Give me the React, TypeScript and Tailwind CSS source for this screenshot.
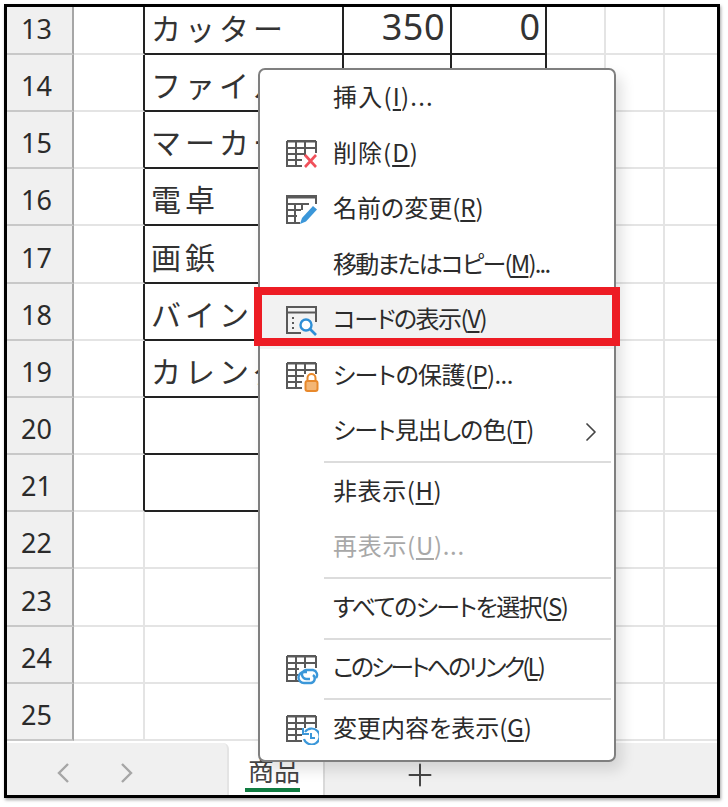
import type { ReactNode } from 'react'
import { ChevronRight, Plus } from 'lucide-react'

const rows = [
  { no: 13, name: 'カッター', price: '350', stock: '0' },
  { no: 14, name: 'ファイル' },
  { no: 15, name: 'マーカー' },
  { no: 16, name: '電卓' },
  { no: 17, name: '画鋲' },
  { no: 18, name: 'バインダー' },
  { no: 19, name: 'カレンダー' },
  { no: 20, name: '' },
  { no: 21, name: '' },
  { no: 22 },
  { no: 23 },
  { no: 24 },
  { no: 25 },
]

// base sheet glyph shared by most of the menu icons
function SheetIcon({ children }: { children?: ReactNode }) {
  return (
    <svg width="34" height="32" viewBox="0 0 34 32" fill="none">
      <path d="M2 3h29M2 3v25h15M2 10h29M2 16h18M2 22h15M11 3v25M20 3v15M31 3v12" stroke="#595959" strokeWidth="2" />
      <path d="M2 2h29v2.5H2z" fill="#595959" />
      {children}
    </svg>
  )
}

function DeleteIcon() {
  return (
    <SheetIcon>
      <path d="M20 17l11 12M31 17L20 29" stroke="#f0505a" strokeWidth="2.6" />
    </SheetIcon>
  )
}

function RenameIcon() {
  return (
    <svg width="34" height="32" viewBox="0 0 34 32" fill="none">
      <path d="M31 10V2H2v27h13M2 10h22M2 16h14M2 22h10M10 10v19M17 10v6" stroke="#595959" strokeWidth="2" />
      <path d="M2 2h29v2.5H2z" fill="#595959" />
      <path d="M15 30l2-6 11-12 4 3.500-11 12z" fill="#3b97d9" />
    </svg>
  )
}

function CodeIcon() {
  return (
    <svg width="34" height="32" viewBox="0 0 34 32" fill="none">
      <path d="M16 28H2V2h29v15M2 7.500h29" stroke="#595959" strokeWidth="2" />
      <path d="M7 13h3M7 18h3M7 23h3" stroke="#595959" strokeWidth="2" strokeDasharray="2 1" />
      <circle cx="21" cy="20" r="5.500" stroke="#2f8fd6" strokeWidth="2.400" fill="#fff" />
      <path d="M25 24l6 6" stroke="#2f8fd6" strokeWidth="2.600" />
    </svg>
  )
}

function LockIcon() {
  return (
    <SheetIcon>
      <rect x="19" y="14" width="15" height="18" fill="#fff" />
      <path d="M22.500 21v-3a4 4 0 0 1 8 0v3" stroke="#e8892c" strokeWidth="2" />
      <rect x="20.500" y="21" width="12" height="10" rx="2" fill="#f3b676" stroke="#e8892c" strokeWidth="2" />
    </SheetIcon>
  )
}

function LinkIcon() {
  return (
    <SheetIcon>
      <rect x="14" y="15" width="20" height="17" fill="#fff" />
      <path d="M22 19h-3a5.500 5.500 0 0 0 0 11h7a4.500 4.500 0 0 0 2-8" stroke="#3b97d9" strokeWidth="2.400" />
      <path d="M25 26h-3a4.500 4.500 0 0 1-1-9h7a5 5 0 0 1 3 8" stroke="#3b97d9" strokeWidth="2.400" />
    </SheetIcon>
  )
}

function HistoryIcon() {
  return (
    <SheetIcon>
      <rect x="17" y="15" width="17" height="17" fill="#fff" />
      <path d="M20 19a8 8 0 1 1-1 7" stroke="#3b97d9" strokeWidth="2.200" />
      <path d="M18 15v6h6" stroke="#3b97d9" strokeWidth="2" />
      <path d="M26 20v5h4" stroke="#3b97d9" strokeWidth="2" />
    </SheetIcon>
  )
}

function MenuItem({ icon, label, hot, tail, active, disabled, arrow, spacing = '' }: {
  icon?: ReactNode
  label: string
  hot: string
  tail?: string
  active?: boolean
  disabled?: boolean
  arrow?: boolean
  spacing?: string
}) {
  return (
    <div className={`flex h-[55.5px] items-center ${active ? 'bg-[#f2f2f2]' : ''}`}>
      <div className="flex w-[73px] justify-end pr-[14px]">{icon}</div>
      <span className={`flex-1 pb-[5px] text-[24px] [font-feature-settings:'palt'] ${spacing} ${disabled ? 'text-[#a8a8a8]' : 'text-[#2b2b2b]'}`}>
        {label}(<span className="underline underline-offset-[3px]">{hot}</span>){tail}
      </span>
      {arrow && <ChevronRight className="mr-[7px] h-[32px] w-[32px] text-[#444]" strokeWidth={1.3} />}
    </div>
  )
}

function Separator() {
  return (
    <div className="flex h-[5px] items-center pl-[64px] pr-[3px]">
      <div className="h-[2px] w-full bg-[#dcdcdc]" />
    </div>
  )
}

export default function App() {
  return (
    <div className="h-[807px] w-[728px] overflow-hidden bg-white pl-[4px] pt-[4px] font-['Noto_Sans','Noto_Sans_CJK_JP',sans-serif]">
      <div className="relative flex h-[794px] w-[716px] flex-col overflow-hidden border-[3px] border-black bg-white shadow-[1px_2px_3px_rgba(0,0,0,0.35)]">
        <div className="grid grid-cols-[67px_71px_199px_108px_95px_59px_59px_1fr]">
          {rows.map((row, i) => {
            const inTable = row.name !== undefined
            const cellH = i === 0 ? 'h-[48px]' : 'h-[57.17px]'
            return (
              <div key={row.no} className="contents">
                <div className={`${cellH} flex items-end justify-center border-b-2 border-r-2 border-b-[#c8c8c8] border-r-[#a6a6a6] bg-[#f0f0f0] pb-[4px] pr-[6px] text-[27px] leading-[40px] text-[#2b2b2b]`}>
                  {row.no}
                </div>
                <div className={`${cellH} border-b-2 border-r-2 border-b-[#e4e4e4] ${inTable ? 'border-r-[#222]' : 'border-r-[#e4e4e4]'}`} />
                <div className={`${cellH} flex items-end border-b-2 border-r-2 pb-[7px] pl-[6px] text-[30px] leading-[38px] tracking-[4px] text-[#333] font-['Noto_Sans_CJK_JP',sans-serif] ${inTable ? 'border-[#222]' : 'border-[#e4e4e4]'}`}>
                  {row.name}
                </div>
                <div className={`${cellH} flex items-end justify-end border-b-2 border-r-2 pb-[6px] pr-[5px] text-[36px] leading-[40px] tracking-[0.500px] text-[#333] ${inTable ? 'border-[#222]' : 'border-[#e4e4e4]'}`}>
                  {row.price}
                </div>
                <div className={`${cellH} flex items-end justify-end border-b-2 border-r-2 pb-[6px] pr-[5px] text-[36px] leading-[40px] text-[#333] ${inTable ? 'border-[#222]' : 'border-[#e4e4e4]'}`}>
                  {row.stock}
                </div>
                <div className={`${cellH} border-b-2 border-r-2 border-[#e4e4e4]`} />
                <div className={`${cellH} border-b-2 border-r-2 border-[#e4e4e4]`} />
                <div className={`${cellH} border-b-2 border-[#e4e4e4]`} />
              </div>
            )
          })}
        </div>

        {/* sheet tabs */}
        <div className="flex flex-1 pt-[2px]">
          <div className="flex w-[222px] items-center gap-[50px] rounded-tr-[6px] border-r-2 border-[#e4e4e4] bg-[#f0f0f0] pl-[49px] pt-[8px]">
            <svg width="14" height="20" viewBox="0 0 14 20" fill="none">
              <path d="M12 1l-9 9 9 9" stroke="#a6a6a6" strokeWidth="2.400" />
            </svg>
            <svg width="14" height="20" viewBox="0 0 14 20" fill="none">
              <path d="M2 1l9 9-9 9" stroke="#a6a6a6" strokeWidth="2.400" />
            </svg>
          </div>
          <div className="flex w-[96px] flex-col items-start border-r-2 border-[#d9d9d9] bg-white pl-[16px]">
            <span className="ml-[3px] mt-[10px] text-[26px] leading-[34px] text-[#444] font-['Noto_Sans_CJK_JP',sans-serif] [font-feature-settings:'palt']">商品</span>
            <div className="mt-[1px] h-[4px] w-[55px] bg-[#107c41]" />
          </div>
          <div className="flex flex-1 items-start bg-[#f0f0f0] pl-[77px] pt-[14px]">
            <Plus className="h-[36px] w-[36px] text-[#444]" strokeWidth={1.3} />
          </div>
        </div>

        {/* context menu */}
        <div className="absolute left-[251px] top-[61px] h-[694px] w-[358px] rounded-[7px] border-2 border-[#7f7f7f] bg-white pt-[1px] font-['Noto_Sans_CJK_JP',sans-serif] shadow-[6px_8px_14px_rgba(0,0,0,0.12)]">
          <MenuItem label="挿入" hot="I" tail="..." spacing="tracking-[1.200px]" />
          <MenuItem icon={<DeleteIcon />} label="削除" hot="D" spacing="tracking-[1px]" />
          <MenuItem icon={<RenameIcon />} label="名前の変更" hot="R" />
          <MenuItem label="移動またはコピー" hot="M" tail="..." spacing="tracking-[-1.800px]" />
          <MenuItem icon={<CodeIcon />} label="コードの表示" hot="V" active spacing="tracking-[-1.500px]" />
          <MenuItem icon={<LockIcon />} label="シートの保護" hot="P" tail="..." spacing="tracking-[-0.600px]" />
          <MenuItem label="シート見出しの色" hot="T" arrow spacing="tracking-[-0.900px]" />
          <Separator />
          <MenuItem label="非表示" hot="H" spacing="tracking-[0.600px]" />
          <MenuItem label="再表示" hot="U" tail="..." disabled spacing="tracking-[0.700px]" />
          <Separator />
          <MenuItem label="すべてのシートを選択" hot="S" spacing="tracking-[-1.500px]" />
          <Separator />
          <MenuItem icon={<LinkIcon />} label="このシートへのリンク" hot="L" spacing="tracking-[-2.900px]" />
          <Separator />
          <MenuItem icon={<HistoryIcon />} label="変更内容を表示" hot="G" />
        </div>

        {/* red highlight around the selected item */}
        <div className="absolute left-[247px] top-[280px] h-[59px] w-[366px] border-[8px] border-[#ed1c24]" />
      </div>
    </div>
  )
}
